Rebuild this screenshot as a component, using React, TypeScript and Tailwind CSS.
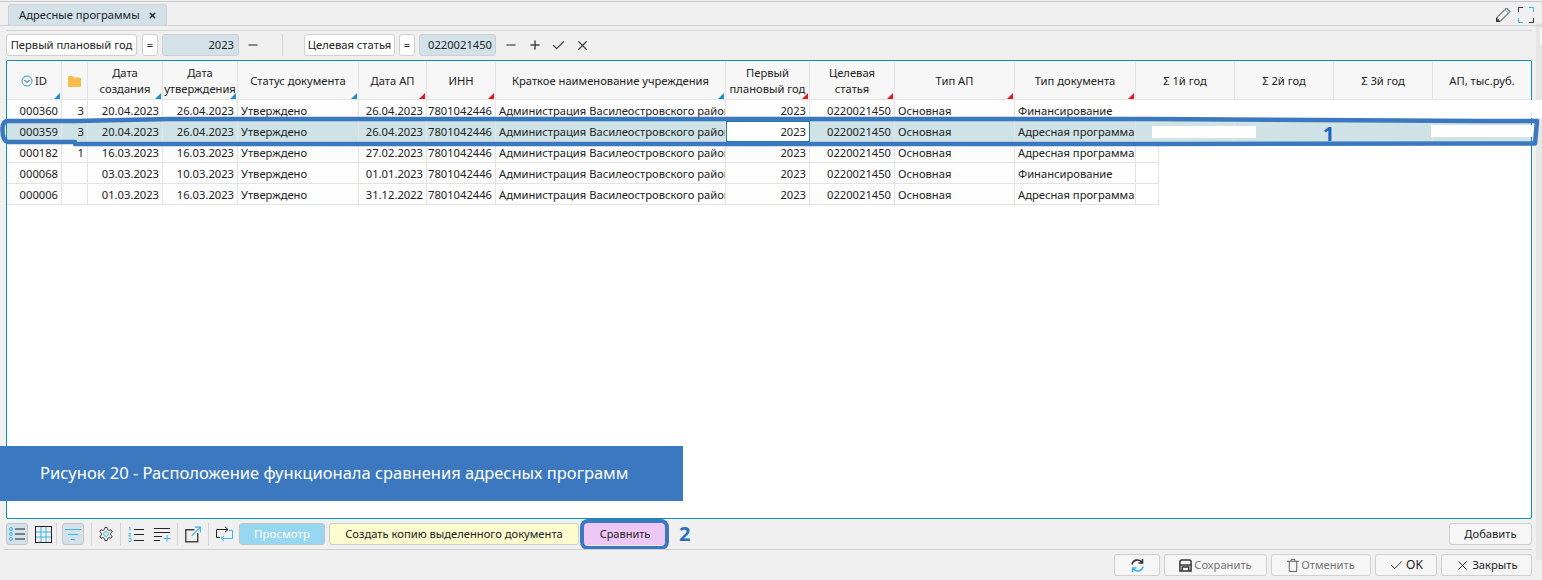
import { Check, Minus, Plus, X } from "lucide-react";

const gridCols =
  "grid grid-cols-[55px_26px_75px_75px_121px_68px_69px_230px_84px_85px_120px_121px_99px_99px_99px_99px]";

const headers = [
  { label: "ID", mark: "blue", icon: true },
  { label: "", mark: "", folder: true },
  { label: "Дата создания", mark: "blue" },
  { label: "Дата утверждения", mark: "blue" },
  { label: "Статус документа", mark: "blue" },
  { label: "Дата АП", mark: "red" },
  { label: "ИНН", mark: "red" },
  { label: "Краткое наименование учреждения", mark: "blue" },
  { label: "Первый плановый год", mark: "red" },
  { label: "Целевая\nстатья", mark: "red" },
  { label: "Тип АП", mark: "red" },
  { label: "Тип документа", mark: "red" },
  { label: "Σ 1й год", mark: "" },
  { label: "Σ 2й год", mark: "" },
  { label: "Σ 3й год", mark: "" },
  { label: "АП, тыс.руб.", mark: "" },
];

const rows = [
  ["000360", "3", "20.04.2023", "26.04.2023", "26.04.2023", "Финансирование"],
  ["000359", "3", "20.04.2023", "26.04.2023", "26.04.2023", "Адресная программа"],
  ["000182", "1", "16.03.2023", "16.03.2023", "27.02.2023", "Адресная программа"],
  ["000068", "", "03.03.2023", "10.03.2023", "01.01.2023", "Финансирование"],
  ["000006", "", "01.03.2023", "16.03.2023", "31.12.2022", "Адресная программа"],
];

function Cell({ children, left, active }: { children?: React.ReactNode; left?: boolean; active?: boolean }) {
  return (
    <div
      className={`overflow-hidden whitespace-nowrap border-r border-b border-[#e3e3e3] leading-[22px] ${
        left ? "pl-[3px] text-left" : "pr-[3px] text-right"
      } ${active ? "bg-white outline outline-1 -outline-offset-1 outline-[#1d7fa3]" : ""}`}
    >
      {children}
    </div>
  );
}

function Sep() {
  return <div className="mx-[4px] h-[22px] w-px bg-[#d4d4d4]" />;
}

function Tool({ children, on, className }: { children: React.ReactNode; on?: boolean; className?: string }) {
  return (
    <div
      className={`flex h-[22px] items-center justify-center rounded-[3px] ${
        on ? "border border-[#c4c4c4] bg-[#d3e2e8]" : ""
      } ${className ?? ""}`}
    >
      {children}
    </div>
  );
}

function Btn({ children, className }: { children: React.ReactNode; className: string }) {
  return (
    <div
      className={`flex h-[22px] items-center justify-center gap-[2px] rounded-[3px] border border-[#cfcfcf] bg-[#f6f6f6] ${className}`}
    >
      {children}
    </div>
  );
}

export default function App() {
  return (
    <div className="relative flex h-[580px] w-[1542px] flex-col overflow-hidden bg-[#f0f0f0] font-['Open_Sans',sans-serif] text-[11.2px] text-[#222]">
      {/* Page scrollbar strip */}
      <div className="absolute top-[23px] right-0 h-[537px] w-[6px] bg-[#e6e6e6]" />
      <div className="absolute top-[28px] right-0 h-[17px] w-[2px] bg-[#f6f6f6]" />

      {/* Tabs */}
      <div className="relative mt-[1px] flex h-[25px] items-end justify-between border-t border-b border-t-[#c8c8c8] border-b-[#d0d0d0] pl-[8px] pr-[8px]">
        <div className="flex h-[21px] w-[159px] items-center gap-[8px] rounded-t-[3px] border border-b-0 border-[#d0d0d0] bg-[#d3e2e8] pl-[10px] pt-[1px]">
          <span>Адресные программы</span>
          <X size={9} strokeWidth={4} className="text-[#222]" />
        </div>
        <div className="mb-[2px] flex items-center gap-[7px]">
          <svg width="16" height="16" viewBox="0 0 16 16" fill="none" stroke="#333" strokeWidth="1">
            <path d="M11.5 1 15 4.5 5 14.5H1.5V11Z" />
            <path d="M10 2.5l3.5 3.5" stroke="#39b6ea" />
            <path d="M1.5 11v3.5H5Z" fill="#555" />
          </svg>
          <svg width="16" height="16" viewBox="0 0 16 16" fill="none" strokeWidth="1">
            <path d="M.5 5V.5H5" stroke="#333" />
            <path d="M11 .5h4.5V5" stroke="#39b6ea" />
            <path d="M.5 11v4.5H5" stroke="#39b6ea" />
            <path d="M11 15.5h4.5V11" stroke="#333" />
          </svg>
        </div>
      </div>

      <div className="relative mr-[10px] ml-[6px] mt-[4px] h-px bg-[#d4d4d4]" />

      {/* Filter bar */}
      <div className="relative mt-[3px] flex h-[22px] items-center pl-[6px]">
        <div className="flex h-[22px] w-[131px] items-center justify-center rounded-[3px] border border-[#cfcfcf] bg-white">
          Первый плановый год
        </div>
        <div className="ml-[5px] flex h-[22px] w-[16px] items-center justify-center rounded-[3px] border border-[#cfcfcf] bg-white">
          =
        </div>
        <div className="ml-[4px] flex h-[22px] w-[77px] items-center justify-end rounded-[3px] border border-[#cfcfcf] bg-[#d3e2e8] pr-[4px]">
          2023
        </div>
        <Minus size={14} strokeWidth={2.5} className="ml-[7px] text-[#666]" />
        <div className="ml-[22px] h-[22px] w-px bg-[#d4d4d4]" />
        <div className="ml-[21px] flex h-[22px] w-[91px] items-center justify-center rounded-[3px] border border-[#cfcfcf] bg-white">
          Целевая статья
        </div>
        <div className="ml-[4px] flex h-[22px] w-[16px] items-center justify-center rounded-[3px] border border-[#cfcfcf] bg-white">
          =
        </div>
        <div className="ml-[4px] flex h-[22px] w-[77px] items-center justify-end rounded-[3px] border border-[#cfcfcf] bg-[#d3e2e8] pr-[3px]">
          0220021450
        </div>
        <Minus size={14} strokeWidth={2.5} className="ml-[8px] text-[#666]" />
        <Plus size={14} strokeWidth={2.5} className="ml-[10px] text-[#444]" />
        <Check size={15} className="ml-[9px] text-[#444]" />
        <X size={15} className="ml-[9px] text-[#444]" />
      </div>

      {/* Table frame */}
      <div className="relative mt-[4px] ml-[6px] h-[459px] w-[1526px] overflow-hidden rounded-[2px] border border-[#0a8fb5] bg-white">
        <div className={`${gridCols} h-[39px] border-b border-[#e3e3e3] bg-[#f7f7f7]`}>
          {headers.map((h, i) => (
            <div
              key={i}
              className="relative flex items-center justify-center overflow-hidden border-r border-[#e3e3e3] pt-[2px] text-center leading-[16px]"
            >
              {h.icon && (
                <svg width="12" height="12" viewBox="0 0 12 12" fill="none" className="mr-[2px]">
                  <circle cx="6" cy="6" r="5" stroke="#2b9fd0" />
                  <path d="M3.5 5 6 7.5 8.5 5" stroke="#333" />
                </svg>
              )}
              {h.folder && (
                <svg width="13" height="11" viewBox="0 0 13 11">
                  <path d="M0 1.5C0 .7.6 0 1.4 0h3L6 1.6h5.6c.8 0 1.4.6 1.4 1.4v6.6c0 .8-.6 1.4-1.4 1.4H1.4C.6 11 0 10.4 0 9.6Z" fill="#f7bd4a" />
                </svg>
              )}
              <span className="whitespace-pre-line">{h.label}</span>
              {h.mark === "blue" && (
                <div className="absolute right-[1px] bottom-0 h-[6px] w-[6px] bg-[#1c8fc4] [clip-path:polygon(100%_0,100%_100%,0_100%)]" />
              )}
              {h.mark === "red" && (
                <div className="absolute right-[1px] bottom-0 h-[6px] w-[6px] bg-[#e8141c] [clip-path:polygon(100%_0,100%_100%,0_100%)]" />
              )}
            </div>
          ))}
        </div>

        {rows.map((r, i) => (
          <div key={i} className={`${gridCols} h-[21px] ${i === 1 ? "bg-[#cfe2e6]" : "bg-[#fdfdfd]"}`}>
            <Cell>{r[0]}</Cell>
            <Cell>{r[1]}</Cell>
            <Cell>{r[2]}</Cell>
            <Cell>{r[3]}</Cell>
            <Cell left>Утверждено</Cell>
            <Cell>{r[4]}</Cell>
            <Cell>7801042446</Cell>
            <Cell left>Администрация Василеостровского района</Cell>
            <Cell active={i === 1}>2023</Cell>
            <Cell>0220021450</Cell>
            <Cell left>Основная</Cell>
            <Cell left>{r[5]}</Cell>
            {i === 1 ? (
              <>
                <Cell />
                <Cell />
                <Cell />
                <Cell />
              </>
            ) : (
              <div className="col-span-4 flex bg-white">
                {i !== 0 && <div className="h-[21px] w-[23px] border-r border-b border-[#e3e3e3]" />}
              </div>
            )}
          </div>
        ))}
      </div>

      {/* Bottom toolbar */}
      <div className="relative mt-[4px] flex h-[22px] items-center pl-[6px] pr-[10px]">
        <Tool on className="w-[22px]">
          <svg width="16" height="14" viewBox="0 0 16 14" fill="none">
            <circle cx="2" cy="2" r="1.5" stroke="#39b6ea" />
            <circle cx="2" cy="7" r="1.5" stroke="#39b6ea" />
            <circle cx="2" cy="12" r="1.5" stroke="#39b6ea" />
            <path d="M6 2h10M6 7h10M6 12h10" stroke="#222" />
          </svg>
        </Tool>
        <Tool className="ml-[6px] w-[18px]">
          <svg width="17" height="17" viewBox="0 0 17 17" fill="none">
            <path d="M.5 6h16M.5 11h16M6 .5v16M11 .5v16" stroke="#39b6ea" />
            <rect x=".5" y=".5" width="16" height="16" stroke="#222" />
          </svg>
        </Tool>
        <Sep />
        <Tool on className="ml-[1px] w-[22px]">
          <svg width="16" height="13" viewBox="0 0 16 13" fill="none" stroke="#39b6ea">
            <path d="M0 1.5h16M3 6.5h10M6 11.5h4" />
          </svg>
        </Tool>
        <div className="ml-[3px]">
          <Sep />
        </div>
        <Tool className="ml-[2px] w-[16px]">
          <svg width="16" height="16" viewBox="0 0 24 24" fill="none" stroke="#222" strokeWidth="1.5">
            <path d="M12.2 2h-.4a2 2 0 0 0-2 2v.2a2 2 0 0 1-1 1.7l-.4.3a2 2 0 0 1-2 0l-.2-.1a2 2 0 0 0-2.7.7l-.2.4a2 2 0 0 0 .7 2.7l.2.1a2 2 0 0 1 1 1.7v.5a2 2 0 0 1-1 1.8l-.2.1a2 2 0 0 0-.7 2.7l.2.4a2 2 0 0 0 2.7.7l.2-.1a2 2 0 0 1 2 0l.4.3a2 2 0 0 1 1 1.7v.2a2 2 0 0 0 2 2h.4a2 2 0 0 0 2-2v-.2a2 2 0 0 1 1-1.7l.4-.3a2 2 0 0 1 2 0l.2.1a2 2 0 0 0 2.7-.7l.2-.4a2 2 0 0 0-.7-2.7l-.2-.1a2 2 0 0 1-1-1.8v-.5a2 2 0 0 1 1-1.7l.2-.1a2 2 0 0 0 .7-2.7l-.2-.4a2 2 0 0 0-2.7-.7l-.2.1a2 2 0 0 1-2 0l-.4-.3a2 2 0 0 1-1-1.7V4a2 2 0 0 0-2-2Z" />
            <circle cx="12" cy="12" r="3.5" stroke="#39b6ea" />
          </svg>
        </Tool>
        <div className="ml-[2px]">
          <Sep />
        </div>
        <Tool className="ml-[3px] w-[16px]">
          <svg width="16" height="15" viewBox="0 0 16 15" fill="none">
            <path d="M1 1l1-.5V4M.5 6.5H3L.7 9h2.5M.5 11.5h2.5v3H.5" stroke="#39b6ea" strokeWidth=".9" />
            <path d="M6 2.5h10M6 7.5h10M6 13.5h10" stroke="#222" />
          </svg>
        </Tool>
        <Tool className="ml-[10px] w-[17px]">
          <svg width="17" height="15" viewBox="0 0 17 15" fill="none">
            <path d="M0 1.5h16M0 5.5h16M0 9.5h8M0 13.5h6" stroke="#222" />
            <path d="M13 8v6.5M9.5 11.5h7" stroke="#39b6ea" />
          </svg>
        </Tool>
        <div className="ml-[2px]">
          <Sep />
        </div>
        <Tool className="ml-[3px] w-[16px]">
          <svg width="17" height="17" viewBox="0 0 17 17" fill="none">
            <path d="M10 3.5H.8v12.7h12.7V7" stroke="#444" strokeWidth="1.5" />
            <path d="M7 10 16 1M10.5.7h5.8v5.8" stroke="#39b6ea" strokeWidth="1.2" />
          </svg>
        </Tool>
        <div className="ml-[3px]">
          <Sep />
        </div>
        <Tool className="ml-[3px] w-[17px]">
          <svg width="17" height="16" viewBox="0 0 17 16" fill="none">
            <path d="M4 11.5H.5V3.5h11M9 .8l3 2.7-3 2.7" stroke="#222" />
            <path d="M13 4.5h3.5v8H5.5M8 9.8l-3 2.7 3 2.7" stroke="#39b6ea" />
          </svg>
        </Tool>
        <div className="ml-[6px] flex h-[22px] w-[86px] items-center justify-center rounded-[3px] border border-[#c4c4c4] bg-[#97d7f2] text-[11.5px] text-white">
          Просмотр
        </div>
        <div className="ml-[4px] flex h-[22px] w-[250px] items-center justify-center rounded-[3px] border border-[#cfcfcf] bg-[#fbfdcf] text-[11.2px]">
          Создать копию выделенного документа
        </div>
        <div className="relative ml-[5px] flex h-[22px] w-[82px] items-center justify-center rounded-[3px] bg-[#edc8f7] text-[11px]">
          Сравнить
          <div className="absolute -top-[4px] -right-[3px] -bottom-[5px] -left-[4px] rounded-[8px] border-[4px] border-[#3b78bf]" />
        </div>
        <span className="ml-[13px] text-[20px] font-bold text-[#2a6fbb]">2</span>
        <Btn className="ml-auto w-[83px]">Добавить</Btn>
      </div>

      <div className="relative mr-[10px] ml-[4px] mt-[4px] h-px bg-[#d0d0d0]" />

      {/* Footer buttons */}
      <div className="relative mt-[4px] flex justify-end gap-[4px] pr-[10px]">
        <Btn className="w-[46px]">
          <svg width="15" height="15" viewBox="0 0 15 15" fill="none" strokeWidth="1.6">
            <path d="M2 6.5A5.5 5.5 0 0 1 12 4.5M12.5 1v4h-4" stroke="#333" />
            <path d="M13 8.5A5.5 5.5 0 0 1 3 10.5M2.5 14v-4h4" stroke="#39b6ea" />
          </svg>
        </Btn>
        <Btn className="w-[103px] text-[#777]">
          <svg width="13" height="13" viewBox="0 0 14 14" fill="none" stroke="#333" strokeWidth="1.6">
            <path d="M1 3a2 2 0 0 1 2-2h8a2 2 0 0 1 2 2v10H1Z" />
            <path d="M3.5 13V8.5h7V13" />
            <path d="M1 6.5h12" />
          </svg>
          Сохранить
        </Btn>
        <Btn className="w-[100px] text-[#777]">
          <svg width="12" height="14" viewBox="0 0 13 15" fill="none" stroke="#555">
            <path d="M0 3.5h13M4.5 3.5v-2h4v2M2.5 3.5v11h8v-11" />
          </svg>
          Отменить
        </Btn>
        <Btn className="w-[62px] text-[12px]">
          <Check size={15} strokeWidth={1.5} />
          OK
        </Btn>
        <Btn className="w-[91px]">
          <X size={15} strokeWidth={1.5} />
          Закрыть
        </Btn>
      </div>

      {/* Annotations over the screenshot */}
      <div className="absolute top-[100px] left-[1124px] h-[18px] w-[418px] bg-white" />
      <div className="absolute top-[126px] left-[1152px] h-[12px] w-[104px] bg-white" />
      <div className="absolute top-[125px] left-[1431px] h-[12px] w-[104px] bg-white" />
      <svg className="absolute top-0 left-0" width="1542" height="580" fill="none">
        <path
          d="M75 121 H8 Q3 121 2.5 128 Q2 141 8 142 H75 L75 144 H1158 L1490 143.5 H1535 L1537 121 H1480 L1150 119 H170 L75 121Z"
          stroke="#3b78bf"
          strokeWidth="4.5"
          strokeLinejoin="round"
        />
      </svg>
      <span className="absolute top-[119px] left-[1323px] text-[20px] font-bold text-[#1565c0]">1</span>
      <div className="absolute top-[446px] left-0 flex h-[55px] w-[683px] items-center bg-[#3b78bf] pl-[40px] text-[16.5px] text-white">
        Рисунок 20 - Расположение функционала сравнения адресных программ
      </div>
    </div>
  );
}
